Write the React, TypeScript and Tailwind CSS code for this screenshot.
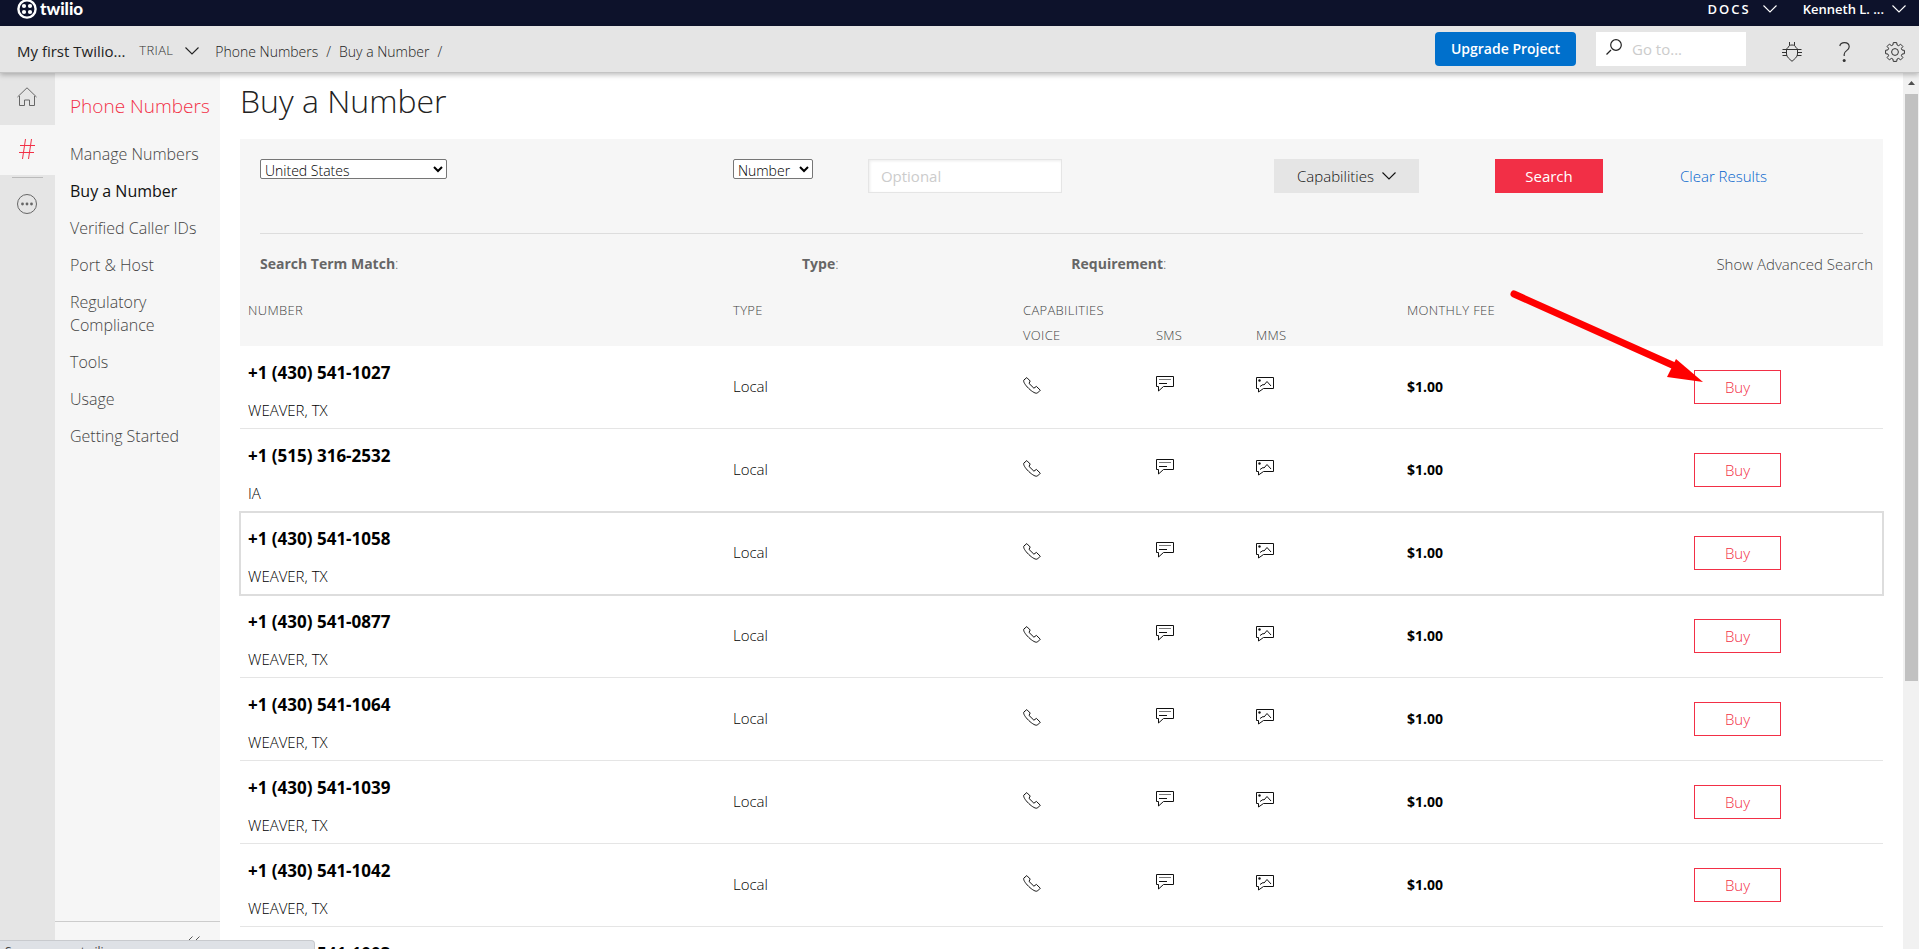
import React from 'react';

interface PhoneNumber {
    number: string;
    location: string;
}

const numbers: PhoneNumber[] = [
    { number: '+1 (430) 541-1027', location: 'WEAVER, TX' },
    { number: '+1 (515) 316-2532', location: 'IA' },
    { number: '+1 (430) 541-1058', location: 'WEAVER, TX' },
    { number: '+1 (430) 541-0877', location: 'WEAVER, TX' },
    { number: '+1 (430) 541-1064', location: 'WEAVER, TX' },
    { number: '+1 (430) 541-1039', location: 'WEAVER, TX' },
    { number: '+1 (430) 541-1042', location: 'WEAVER, TX' },
    { number: '+1 (430) 541-1003', location: 'WEAVER, TX' },
];

const menuItems = [
    'Manage Numbers',
    'Buy a Number',
    'Verified Caller IDs',
    'Port & Host',
    'Regulatory Compliance',
    'Tools',
    'Usage',
    'Getting Started',
];

const HIGHLIGHTED = '+1 (430) 541-1058';

const Chevron = ({ className }: { className?: string }) => (
    <svg className={className} width="14" height="8" viewBox="0 0 14 8" fill="none" stroke="currentColor" strokeWidth="1.1">
        <path d="M0.5 0.5 L7 7 L13.5 0.5" />
    </svg>
);

const TwilioMark = () => (
    <svg width="20" height="20" viewBox="0 0 20 20" className="shrink-0 -mt-px">
        <circle cx="10" cy="10" r="8.6" fill="none" stroke="white" strokeWidth="2.4" />
        <circle cx="7" cy="7" r="2.1" fill="white" />
        <circle cx="13" cy="7" r="2.1" fill="white" />
        <circle cx="7" cy="13" r="2.1" fill="white" />
        <circle cx="13" cy="13" r="2.1" fill="white" />
    </svg>
);

const HomeIcon = () => (
    <svg width="20" height="20" viewBox="0 0 20 20" fill="none" stroke="#666">
        <path d="M0.5 10 L10 0.8 L19.5 10" />
        <path d="M2.5 9 V18.5 H7.5 V13 H12.5 V18.5 H17.5 V9" />
    </svg>
);

const HashIcon = () => (
    <svg width="16" height="20" viewBox="0 0 16 20" fill="none" stroke="#f22f46">
        <path d="M6.5 0 L3.5 20 M12.5 0 L9.5 20 M1 6.5 H16 M0 13.5 H15" />
    </svg>
);

const MoreIcon = () => (
    <svg width="20" height="20" viewBox="0 0 20 20" fill="none" stroke="#666">
        <circle cx="10" cy="10" r="9.5" />
        <g fill="#666" stroke="none">
            <circle cx="5.5" cy="10" r="1.4" />
            <circle cx="10" cy="10" r="1.4" />
            <circle cx="14.5" cy="10" r="1.4" />
        </g>
    </svg>
);

const SearchIcon = () => (
    <svg width="16" height="16" viewBox="0 0 16 16" fill="none" stroke="#222" strokeWidth="1.2" className="shrink-0 -mt-1">
        <circle cx="10" cy="6" r="5.3" />
        <path d="M5 11 L0.5 15.5" />
    </svg>
);

const BugIcon = () => (
    <svg width="20" height="20" viewBox="0 0 20 20" fill="none" stroke="#333">
        <path d="M6.5 5 C6.5 3.8 8 3 10 3 C12 3 13.5 3.8 13.5 5 L15.5 7 V12 C15.5 15 12.5 17 10 19.3 C7.5 17 4.5 15 4.5 12 V7 Z" />
        <path d="M7.5 0 V3.5 M12.5 0 V3.5" />
        <path d="M0.5 7.5 H19.5 M0 10.5 H4.5 M15.5 10.5 H20 M0.5 13.5 H5 M15 13.5 H19.5" />
    </svg>
);

const HelpIcon = () => (
    <svg width="11" height="20" viewBox="0 0 11 20" fill="none" stroke="#333" strokeWidth="1.2">
        <path d="M0.8 4 C1.4 1.6 3.2 0.7 5.4 0.7 C8.4 0.7 10.2 2.4 10.2 4.8 C10.2 8.6 5.2 8.6 5.2 12.2 V14" />
        <circle cx="5.2" cy="18.4" r="1.5" fill="#333" stroke="none" />
    </svg>
);

const GearIcon = () => (
    <svg width="20" height="20" viewBox="0 0 20 20" fill="none" stroke="#333" strokeLinejoin="round">
        <circle cx="10" cy="10" r="3.4" />
        <path d="M8.3 0.6 H11.7 L12.1 3 L13.7 3.7 L15.6 2.2 L17.9 4.5 L16.4 6.4 L17 8 L19.4 8.4 V11.7 L17 12.1 L16.4 13.7 L17.9 15.6 L15.6 17.9 L13.7 16.4 L12.1 17 L11.7 19.4 H8.3 L7.9 17 L6.3 16.4 L4.4 17.9 L2.1 15.6 L3.6 13.7 L3 12.1 L0.6 11.7 V8.3 L3 7.9 L3.6 6.3 L2.1 4.4 L4.4 2.1 L6.3 3.6 L7.9 3 Z" />
    </svg>
);

const VoiceIcon = () => (
    <svg width="18" height="17" viewBox="0 0 18 17" fill="none" stroke="#111">
        <path d="M3.8 0.6 L0.9 3 C0.2 4 1 6.4 4.3 10 C8 14 11.8 16.4 13.6 16.2 L14.6 15.9 L17.3 13.2 L13.4 9.4 L10.9 11.2 L6 6.4 L7.2 4 Z" />
    </svg>
);

const SmsIcon = () => (
    <svg width="18" height="16" viewBox="0 0 18 16" fill="none" stroke="#111">
        <path d="M0.5 0.5 H17.5 V10.5 H7.5 L2.5 15 V10.5 H0.5 Z" />
        <path d="M3 3.5 H15" stroke="#777" />
        <path d="M3 7.5 H11" />
    </svg>
);

const MmsIcon = () => (
    <svg width="18" height="16" viewBox="0 0 18 16" fill="none" stroke="#111">
        <path d="M0.5 0.5 H17.5 V11.5 H7.5 L2.5 15 V11.5 H0.5 Z" />
        <path d="M4 9.5 L7 7.5 L8 8 L11 4.5 L15 9" />
        <circle cx="3.5" cy="3.5" r="1.2" fill="#111" stroke="none" />
    </svg>
);

const TopBar = () => (
    <header className="shrink-0 h-[26px] bg-[#0d122b] text-white flex items-start justify-between pl-[17px] pr-[13px]">
        <a href="#home" className="flex items-start gap-[3px]" aria-label="twilio">
            <TwilioMark />
            <span className="font-['Lato'] font-black text-[17px] leading-[17px]">twilio</span>
        </a>
        <div className="flex items-center h-[18px] text-[13px] leading-4 font-semibold">
            <button className="flex items-center gap-3 mr-[26px]">
                <span className="tracking-[2px]">DOCS</span>
                <Chevron />
            </button>
            <button className="flex items-center gap-2">
                Kenneth L. ...
                <Chevron />
            </button>
        </div>
    </header>
);

const ProjectBar = () => (
    <div className="relative z-10 shrink-0 h-[47px] bg-[#e5e5e5] border-b border-[#c4c4c4] shadow-[0_2px_5px_rgba(0,0,0,0.25)] flex items-center pl-[17px] pr-[14px]">
        <button className="mt-1 flex items-center text-[15px] text-[#222]">
            My first Twilio...
            <span className="ml-[14px] text-[13px] font-light tracking-wide text-[#333]">TRIAL</span>
            <Chevron className="ml-3" />
        </button>
        <nav className="mt-[6px] ml-4 flex items-center gap-2 text-sm font-light text-[#222]">
            <a href="#phone-numbers">Phone Numbers</a>
            <span>/</span>
            <a href="#buy">Buy a Number</a>
            <span>/</span>
        </nav>
        <div className="ml-auto flex items-center">
            <button className="h-[34px] w-[141px] rounded bg-[#0070cc] text-white text-sm font-semibold">Upgrade Project</button>
            <label className="ml-5 w-[150px] h-[34px] bg-white flex items-center pl-[10px] gap-[10px]">
                <SearchIcon />
                <input className="w-24 text-[15px] outline-none placeholder:text-[#ccc]" placeholder="Go to..." aria-label="Go to" />
            </label>
            <button className="ml-9 mt-[6px]" aria-label="Debugger"><BugIcon /></button>
            <button className="ml-[37px] mt-[6px]" aria-label="Help"><HelpIcon /></button>
            <button className="ml-[35px] mt-[6px]" aria-label="Settings"><GearIcon /></button>
        </div>
    </div>
);

const IconRail = () => (
    <div className="w-[55px] shrink-0 bg-[#e5e5e5] flex flex-col items-center">
        <a href="#home" className="h-[52px] w-full pr-px pb-1 flex items-center justify-center" aria-label="Home"><HomeIcon /></a>
        <a href="#numbers" className="h-[50px] w-full pr-px pb-[2px] bg-[#f6f6f6] flex items-center justify-center" aria-label="Phone Numbers"><HashIcon /></a>
        <div className="mt-[2px] w-[31px] border-t border-[#bbb]" />
        <a href="#all" className="mt-4 pr-px" aria-label="All products"><MoreIcon /></a>
    </div>
);

const Sidebar = () => (
    <aside className="w-[165px] shrink-0 bg-[#f6f6f6] flex flex-col">
        <h2 className="mt-[21px] mb-[25px] pl-[15px] text-[19px] leading-6 font-light text-[#f22f46] whitespace-nowrap">Phone Numbers</h2>
        <nav className="flex flex-col gap-[14px] pl-[15px] pr-5 text-base leading-[23px] font-light text-[#444]">
            {menuItems.map(item => (
                <a
                    key={item}
                    href="#menu"
                    className={item === 'Buy a Number' ? 'font-medium text-[#111]' : item === 'Regulatory Compliance' ? '' : 'whitespace-nowrap'}
                >
                    {item}
                </a>
            ))}
        </nav>
        <button className="mt-auto h-7 border-t border-[#ccc] flex items-start justify-end pt-[14px] pr-5" aria-label="Collapse menu">
            <svg width="14" height="12" viewBox="0 0 14 12" fill="none" stroke="#555">
                <path d="M6.5 0.5 L1 6 L6.5 11.5 M13.5 0.5 L8 6 L13.5 11.5" />
            </svg>
        </button>
    </aside>
);

const SearchForm = () => (
    <div className="bg-[#f6f6f6] px-5 pt-5 text-[15px]">
        <div className="h-[75px] flex items-start border-b border-[#ddd]">
            <div className="w-[29.5%]">
                <select className="block w-[187px] h-5 bg-white border border-[#767676] rounded-xs text-sm font-light text-black" aria-label="Country">
                    <option>United States</option>
                </select>
            </div>
            <select className="w-20 h-5 bg-white border border-[#767676] rounded-xs text-sm font-light text-black" aria-label="Search by">
                <option>Number</option>
            </select>
            <input
                className="ml-[55px] w-[194px] h-[34px] px-3 bg-white border border-[#e5e5e5] shadow-[inset_1px_1px_3px_rgba(0,0,0,0.08)] outline-none placeholder:text-[#ccc]"
                placeholder="Optional"
                aria-label="Search term"
            />
            <div className="ml-auto flex items-center">
                <button className="w-[145px] h-[34px] bg-[#e5e5e5] text-[#111] font-light flex items-center justify-center gap-2">
                    Capabilities
                    <Chevron />
                </button>
                <button className="ml-[76px] w-[108px] h-[34px] bg-[#f22f46] text-white">Search</button>
                <a href="#clear" className="ml-[77px] w-[183px] text-[#0263cc] font-light">Clear Results</a>
            </div>
        </div>
    </div>
);

const MatchSummary = () => (
    <div className="bg-[#f6f6f6] pl-5 pr-[10px] pt-5 flex text-sm leading-5 font-light text-[#666]">
        <div className="w-[33.6%]"><b className="font-bold">Search Term Match</b>:</div>
        <div className="w-[16.7%]"><b className="font-bold">Type</b>:</div>
        <div><b className="font-bold">Requirement</b>:</div>
        <button className="ml-auto text-[15px] text-[#444]">Show Advanced Search</button>
    </div>
);

const NumbersTable = () => (
    <table className="w-full table-fixed border-separate border-spacing-0 text-left">
        <colgroup>
            <col className="w-[29.52%]" />
            <col className="w-[17.65%]" />
            <col className="w-[8.09%]" />
            <col className="w-[6.09%]" />
            <col className="w-[9.19%]" />
            <col className="w-[17.47%]" />
            <col />
        </colgroup>
        <thead className="bg-[#f6f6f6] text-[13px] leading-[18px] tracking-wide text-[#444] [&_th]:font-light [&_th]:pl-2 [&_th]:align-bottom">
            <tr className="h-[46px] [&_th]:pb-px">
                <th>NUMBER</th>
                <th>TYPE</th>
                <th colSpan={3}>CAPABILITIES</th>
                <th>MONTHLY FEE</th>
                <th />
            </tr>
            <tr className="h-[26px] [&_th]:pb-[2px]">
                <th />
                <th />
                <th>VOICE</th>
                <th>SMS</th>
                <th>MMS</th>
                <th />
                <th />
            </tr>
        </thead>
        <tbody className="text-[15px] text-black [&_td]:pl-2 [&_td]:border-b [&_td]:border-[#e5e5e5]">
            {numbers.map(({ number, location }) => (
                <tr
                    key={number}
                    className={
                        number === HIGHLIGHTED
                            ? 'h-[83px] outline-2 -outline-offset-1 outline-[#ddd]'
                            : 'h-[83px]'
                    }
                >
                    <td className="pt-2">
                        <div className="text-[17px] leading-6 font-bold">{number}</div>
                        <div className="mt-[13px] leading-6 font-light">{location}</div>
                    </td>
                    <td className="pb-px font-light">Local</td>
                    <td className="pb-1"><VoiceIcon /></td>
                    <td className="pb-[6px]"><SmsIcon /></td>
                    <td className="pb-1"><MmsIcon /></td>
                    <td className="pb-px text-sm font-bold">$1.00</td>
                    <td>
                        <button className="w-[87px] h-[34px] border border-[#f22f46] text-[#f22f46] font-light">Buy</button>
                    </td>
                </tr>
            ))}
        </tbody>
    </table>
);

const Scrollbar = () => (
    <div className="w-4 shrink-0 bg-[#f1f1f1] flex flex-col items-center">
        <svg width="7" height="4" viewBox="0 0 7 4" className="mt-2 mb-[9px] shrink-0">
            <path d="M0 4 L3.5 0 L7 4 Z" fill="#505050" />
        </svg>
        <div className="h-[67%] w-[13px] bg-[#c1c1c1]" />
    </div>
);

// Red pointer from the table header down to the first Buy button
const Arrow = () => (
    <svg className="absolute right-[200px] top-[214px] pointer-events-none" width="196" height="100" viewBox="0 0 196 100">
        <path d="M7 7 L172 81" stroke="#ff0000" strokeWidth="7" strokeLinecap="round" />
        <path d="M196 95 L169 72 L160 90 Z" fill="#ff0000" />
    </svg>
);

const App: React.FC = () => {
    return (
        <div className="h-screen flex flex-col overflow-hidden bg-white font-['Open_Sans','Noto_Sans',sans-serif]">
            <TopBar />
            <ProjectBar />
            <div className="flex-1 min-h-0 flex">
                <IconRail />
                <Sidebar />
                <main className="relative flex-1 min-w-0 overflow-hidden px-5">
                    <h1 className="pt-2 pb-[18px] text-[32px] leading-10 font-light text-[#222]">Buy a Number</h1>
                    <SearchForm />
                    <MatchSummary />
                    <NumbersTable />
                    <Arrow />
                </main>
                <Scrollbar />
            </div>
            <div className="fixed left-0 bottom-0 z-20 w-[315px] h-[9px] overflow-hidden rounded-tr bg-[#dee1e6] border-t border-r border-[#c8cace] pl-[5px] pt-[3px] text-xs leading-4 text-[#444]">
                Source: www.twilio.com
            </div>
        </div>
    );
};

export default App;
